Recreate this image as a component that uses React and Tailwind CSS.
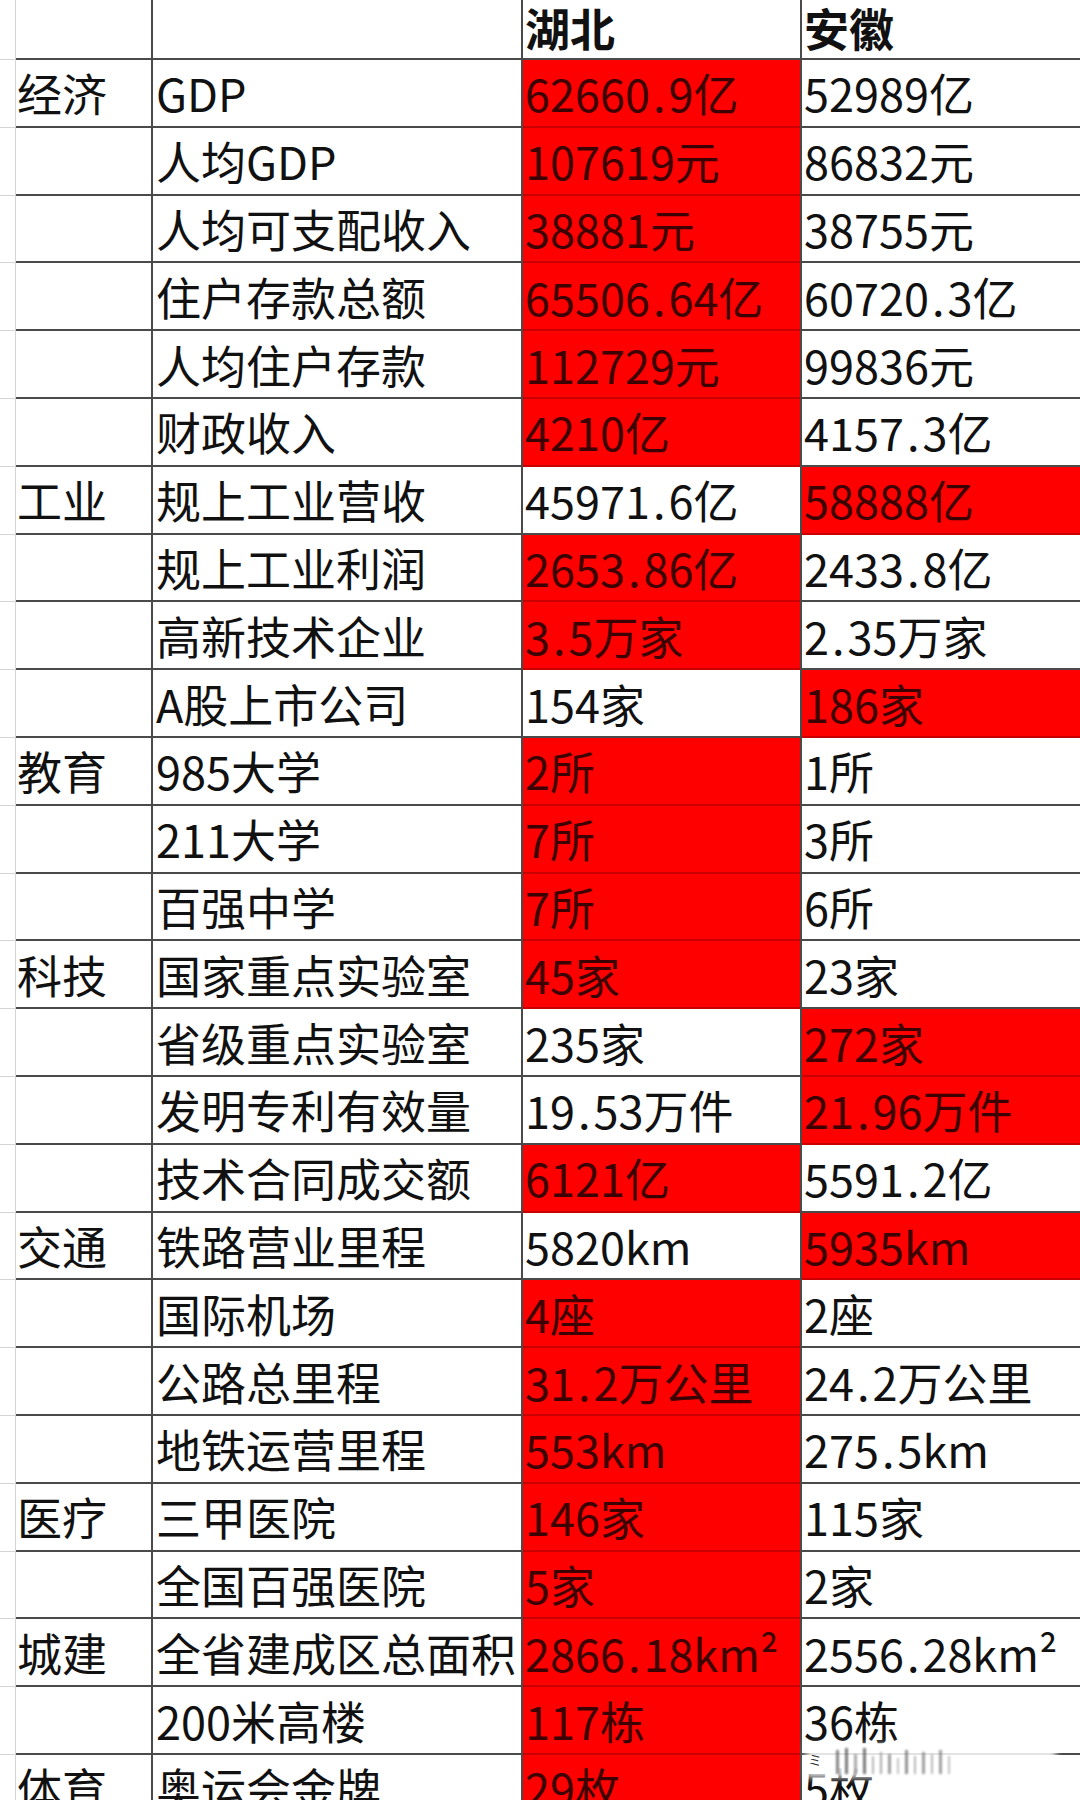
import React from "react";

const rows = [
  ["经济", "GDP", "62660.9亿", "52989亿", 0],
  ["", "人均GDP", "107619元", "86832元", 0],
  ["", "人均可支配收入", "38881元", "38755元", 0],
  ["", "住户存款总额", "65506.64亿", "60720.3亿", 0],
  ["", "人均住户存款", "112729元", "99836元", 0],
  ["", "财政收入", "4210亿", "4157.3亿", 0],
  ["工业", "规上工业营收", "45971.6亿", "58888亿", 1],
  ["", "规上工业利润", "2653.86亿", "2433.8亿", 0],
  ["", "高新技术企业", "3.5万家", "2.35万家", 0],
  ["", "A股上市公司", "154家", "186家", 1],
  ["教育", "985大学", "2所", "1所", 0],
  ["", "211大学", "7所", "3所", 0],
  ["", "百强中学", "7所", "6所", 0],
  ["科技", "国家重点实验室", "45家", "23家", 0],
  ["", "省级重点实验室", "235家", "272家", 1],
  ["", "发明专利有效量", "19.53万件", "21.96万件", 1],
  ["", "技术合同成交额", "6121亿", "5591.2亿", 0],
  ["交通", "铁路营业里程", "5820km", "5935km", 1],
  ["", "国际机场", "4座", "2座", 0],
  ["", "公路总里程", "31.2万公里", "24.2万公里", 0],
  ["", "地铁运营里程", "553km", "275.5km", 0],
  ["医疗", "三甲医院", "146家", "115家", 0],
  ["", "全国百强医院", "5家", "2家", 0],
  ["城建", "全省建成区总面积", "2866.18km²", "2556.28km²", 0],
  ["", "200米高楼", "117栋", "36栋", 0],
  ["体育", "奥运会金牌", "29枚", "5枚", 0],
];

function renderText(text) {
  const parts = text.split(".");
  if (parts.length === 1) return text;
  return (
    <>
      {parts[0]}
      <span className="px-[3px]">.</span>
      {parts[1]}
    </>
  );
}

function Val({ text, red }) {
  return (
    <div
      className={
        "h-full flex items-center pl-[2px] border-b-2 whitespace-nowrap " +
        (red
          ? "bg-[#ff0000] text-[#3c0000] border-[#c80000]"
          : "bg-white text-[#111111] border-[#4a4a4a]")
      }
    >
      {renderText(text)}
    </div>
  );
}

export default function App() {
  return (
    <div
      className="relative w-[1080px] h-[1800px] overflow-hidden bg-white text-[45px] leading-none text-[#111111]"
      style={{ fontFamily: '"Noto Sans CJK SC", "Noto Sans", sans-serif' }}
    >
      <div className="flex flex-col">
        {/* header */}
        <div className="flex h-[60px]">
          <div className="w-[16px] shrink-0 border-r border-b border-[#d4d4d4]" />
          <div className="w-[137px] shrink-0 border-r-2 border-b-2 border-[#4a4a4a]" />
          <div className="w-[370px] shrink-0 border-r-2 border-b-2 border-[#4a4a4a]" />
          <div className="w-[279px] shrink-0 border-r-2 border-b-2 border-[#4a4a4a] flex items-center pl-[2px] font-bold pb-[4px]">
            湖北
          </div>
          <div className="flex-1 border-b-2 border-[#4a4a4a] flex items-center pl-[2px] font-bold pb-[4px]">
            安徽
          </div>
        </div>
        {rows.map(([cat, name, hb, ah, winner], i) => (
          <div key={i} className="flex h-[67.8px] shrink-0">
            <div className="w-[16px] shrink-0 border-r border-b border-[#d4d4d4]" />
            <div className="w-[137px] shrink-0 border-r-2 border-b-2 border-[#4a4a4a] flex items-center pl-[1px] whitespace-nowrap">
              {cat}
            </div>
            <div className="w-[370px] shrink-0 border-r-2 border-b-2 border-[#4a4a4a] flex items-center pl-[3px] whitespace-nowrap overflow-hidden">
              {name}
            </div>
            <div className="w-[279px] shrink-0 border-r-2 border-[#4a4a4a]">
              <Val text={hb} red={winner === 0} />
            </div>
            <div className="flex-1">
              <Val text={ah} red={winner === 1} />
            </div>
          </div>
        ))}
      </div>

      {/* faded watermark overlay */}
      <div className="absolute left-[806px] top-[1744px] w-[250px] h-[34px] pointer-events-none">
        <div className="absolute inset-0 bg-white/85 blur-[3px]" />
        <div className="absolute left-[2px] top-[8px] text-[14px] leading-none text-[#333]">ミ</div>
        <div className="absolute left-[30px] top-[4px] flex gap-[6px] items-end opacity-70 blur-[1px]">
          <div className="w-[3px] h-[24px] bg-[#555]" />
          <div className="w-[3px] h-[26px] bg-[#444]" />
          <div className="w-[3px] h-[20px] bg-[#888]" />
          <div className="w-[3px] h-[26px] bg-[#444]" />
          <div className="w-[2px] h-[18px] bg-[#999]" />
          <div className="w-[2px] h-[22px] bg-[#888]" />
          <div className="w-[3px] h-[20px] bg-[#777]" />
          <div className="w-[2px] h-[16px] bg-[#aaa]" />
          <div className="w-[3px] h-[24px] bg-[#666]" />
          <div className="w-[2px] h-[18px] bg-[#999]" />
          <div className="w-[3px] h-[22px] bg-[#777]" />
          <div className="w-[2px] h-[20px] bg-[#999]" />
          <div className="w-[3px] h-[24px] bg-[#777]" />
          <div className="w-[2px] h-[18px] bg-[#aaa]" />
        </div>
      </div>
    </div>
  );
}
